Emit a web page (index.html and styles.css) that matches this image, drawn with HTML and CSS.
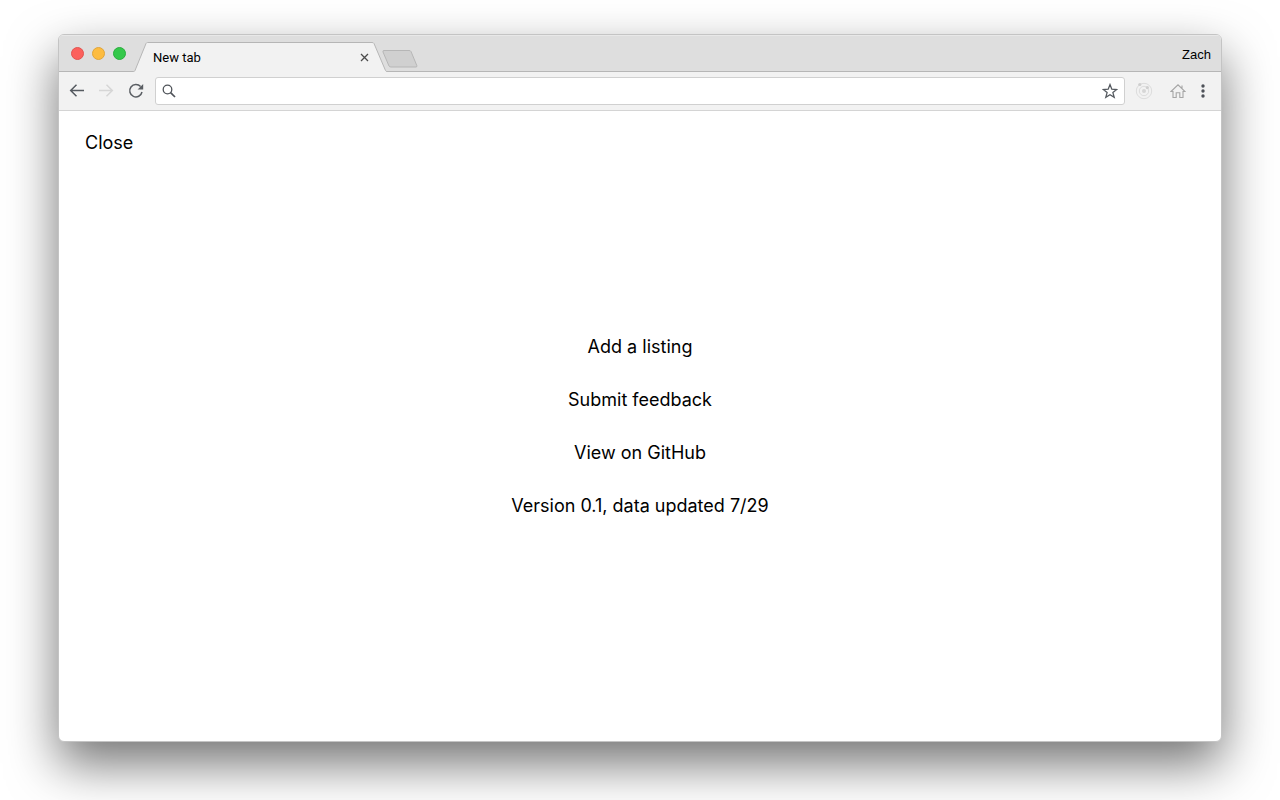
FILE: index.html
```html
<!DOCTYPE html>
<html lang="en">
<head>
<meta charset="utf-8">
<title>New tab</title>
<link rel="stylesheet" href="styles.css">
</head>
<body>
<div class="window">
  <header class="tabstrip">
    <div class="lights">
      <button class="light light-close" aria-label="Close window"></button>
      <button class="light light-min" aria-label="Minimize window"></button>
      <button class="light light-zoom" aria-label="Zoom window"></button>
    </div>
    <div class="tab">
      <svg class="tab-shape" viewBox="0 0 258 30" preserveAspectRatio="none" aria-hidden="true">
        <path d="M0 29.500H1.500Q2.500 29.500 3 28.500L14 1.500Q14.500.5 15.500.5H240Q241.500.5 242 1.500L253.500 28.500Q254 29.500 255 29.500H258V30H0Z" fill="#f2f2f2"/>
        <path d="M0 29.500H1.500Q2.500 29.500 3 28.500L14 1.500Q14.500.5 15.500.5H240Q241.500.5 242 1.500L253.500 28.500Q254 29.500 255 29.500H258" fill="none" stroke="#b6b6b6"/>
      </svg>
      <span class="tab-title">New tab</span>
      <button class="icon-button tab-close" aria-label="Close tab">
        <svg width="9" height="9" viewBox="0 0 9 9"><path d="M1 1l7 7M8 1L1 8" stroke="#4c4c4c" stroke-width="1.300" fill="none"/></svg>
      </button>
    </div>
    <button class="icon-button new-tab" aria-label="Open new tab">
      <svg width="36" height="18" viewBox="0 0 36 18"><path d="M2 .5H27Q28.500.5 29 1.500L34.800 15.500Q35.300 17 34 17H9Q7.500 17 7 16L1 2Q.5.5 2 .5Z" fill="#d0d0d0" stroke="#b6b6b6"/></svg>
    </button>
    <button class="profile">Zach</button>
  </header>
  <div class="toolbar">
    <button class="icon-button" aria-label="Back">
      <svg width="16" height="16" viewBox="0 0 16 16"><path d="M15 7.500H2M7.500 1.700L1.700 7.500l5.800 5.800" fill="none" stroke="#555a60" stroke-width="1.500"/></svg>
    </button>
    <button class="icon-button forward" aria-label="Forward" disabled>
      <svg width="16" height="16" viewBox="0 0 16 16"><path d="M1 7.500H14M8.500 1.700L14.300 7.500l-5.800 5.800" fill="none" stroke="#d6d6d6" stroke-width="1.500"/></svg>
    </button>
    <button class="icon-button reload" aria-label="Reload">
      <svg width="16" height="16" viewBox="0 0 16 16"><path d="M14 9A6.200 6.200 0 1 1 12.600 3.600" fill="none" stroke="#5a5e63" stroke-width="1.500"/><path d="M15.200 1V6.600H9.600Z" fill="#5a5e63"/></svg>
    </button>
    <form class="omnibox">
      <svg width="14" height="14" viewBox="0 0 14 14" aria-hidden="true"><circle cx="5.500" cy="5.500" r="4.300" fill="none" stroke="#50545a" stroke-width="1.300"/><path d="M8.600 8.600L13 13" stroke="#50545a" stroke-width="1.700"/></svg>
      <input class="address" type="text" aria-label="Address and search">
      <button class="icon-button" type="button" aria-label="Bookmark this page">
        <svg width="16" height="16" viewBox="0 0 16 16"><path d="M8 1.600l1.800 4.600 4.900.3-3.800 3.100 1.300 4.700L8 11.700l-4.200 2.600 1.300-4.700L1.300 6.500l4.900-.3Z" fill="none" stroke="#555a60" stroke-width="1.300"/></svg>
      </button>
    </form>
    <button class="icon-button extension" aria-label="Extension">
      <svg width="18" height="18" viewBox="0 0 18 18"><g fill="none" stroke="#dcdcdc"><circle cx="9" cy="9" r="7.700"/><circle cx="9" cy="9" r="4.700"/></g><circle cx="9" cy="9" r="2" fill="#d6d6d6"/><circle cx="4.800" cy="2.500" r="1.600" fill="#cfcfcf"/><circle cx="12.300" cy="5.600" r="1.600" fill="#cfcfcf"/></svg>
    </button>
    <button class="icon-button home" aria-label="Home">
      <svg width="16" height="16" viewBox="0 0 16 16"><path d="M1 8.500L8 1.800l7 6.700H13V14.500H9.800V9.800H6.200V14.500H3V8.500ZM12 5.300V2.500" fill="none" stroke="#a6a6a6" stroke-width="1.100"/></svg>
    </button>
    <button class="icon-button menu" aria-label="Menu">
      <svg width="4" height="14" viewBox="0 0 4 14" fill="#4d5158"><circle cx="2" cy="2" r="1.700"/><circle cx="2" cy="7" r="1.700"/><circle cx="2" cy="12" r="1.700"/></svg>
    </button>
  </div>
  <main class="page">
    <nav class="links">
      <a class="link" href="#add">Add a listing</a>
      <a class="link" href="#feedback">Submit feedback</a>
      <a class="link" href="#github">View on GitHub</a>
      <span class="link">Version 0.1, data updated 7/29</span>
    </nav>
    <button class="close">Close</button>
  </main>
</div>
</body>
</html>
```
FILE: styles.css
```css
* {
  box-sizing: border-box;
}

body {
  margin: 0;
  min-height: 100vh;
  padding: 34px 58px 58px;
  display: flex;
  background: #fff;
  color: #000;
  font-family: Inter, "Liberation Sans", sans-serif;
  overflow: hidden;
}

button {
  border: 0;
  padding: 0;
  background: none;
  color: inherit;
  font: inherit;
}

svg {
  display: block;
}

.window {
  flex: 1;
  display: flex;
  flex-direction: column;
  border: 1px solid #c4c4c4;
  border-radius: 6px;
  background: #fff;
  box-shadow: 0 22px 50px rgba(0, 0, 0, 0.55);
  overflow: hidden;
}

.tabstrip {
  display: flex;
  height: 37px;
  padding-right: 10px;
  background: #dedede;
  border-top: 1px solid #e8e8e8;
  box-shadow: inset 0 -1px #b6b6b6;
  font-size: 13px;
}

.lights {
  display: flex;
  gap: 8px;
  padding: 11px 6px 0 12px;
}

.light {
  width: 13px;
  height: 13px;
  border-radius: 50%;
  border: 1px solid;
}

.light-close {
  background: #fc605c;
  border-color: #e2534f;
}

.light-min {
  background: #fdbc40;
  border-color: #e0a53a;
}

.light-zoom {
  background: #34c84a;
  border-color: #2aae3d;
}

.tab {
  position: relative;
  display: flex;
  align-items: center;
  width: 258px;
  height: 30px;
  margin-top: 6px;
  padding: 0 21px;
}

.tab-shape {
  position: absolute;
  inset: 0;
  width: 100%;
  height: 100%;
}

.tab-title {
  position: relative;
  flex: 1;
  font-family: Roboto, sans-serif;
}

.tab-close {
  position: relative;
}

.icon-button {
  display: grid;
  place-items: center;
  flex: none;
}

.new-tab {
  align-self: flex-start;
  margin: 14px auto 0 -8px;
}

.profile {
  align-self: center;
  font-family: "Liberation Sans", sans-serif;
}

.toolbar {
  display: flex;
  align-items: center;
  height: 39px;
  padding: 0 16px 0 10px;
  background: #f2f2f2;
  border-bottom: 1px solid #d4d4d4;
}

.forward {
  margin-left: 13px;
}

.reload {
  margin-left: 14px;
}

.omnibox {
  flex: 1;
  display: flex;
  align-items: center;
  gap: 8px;
  height: 28px;
  margin: 0 10px 0 11px;
  padding: 0 6px;
  border: 1px solid #d0d0d0;
  border-radius: 3px;
  background: #fff;
}

.address {
  flex: 1;
  min-width: 0;
  border: 0;
  outline: 0;
  background: none;
  font-size: 14px;
}

.home {
  margin-left: 17px;
}

.menu {
  margin-left: 15px;
}

.page {
  position: relative;
  flex: 1;
  display: grid;
  place-items: center;
  font-size: 18px;
  line-height: 24px;
}

.close {
  position: absolute;
  top: 20px;
  left: 26px;
}

.links {
  display: flex;
  flex-direction: column;
  align-items: center;
  gap: 29px;
}

.link {
  color: inherit;
  text-decoration: none;
}
```
